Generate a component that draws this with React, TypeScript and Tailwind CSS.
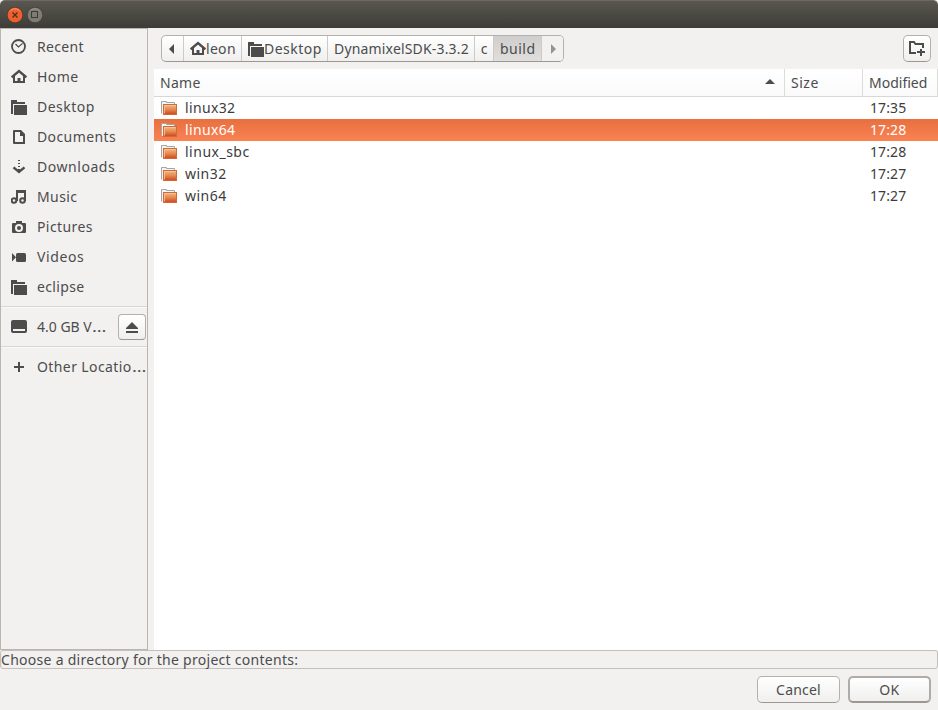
import type { ReactNode } from "react";

const ink = "#4c4c4c";

function Svg({ w = 16, h = 16, children }: { w?: number; h?: number; children: ReactNode }) {
  return (
    <svg width={w} height={h} viewBox={`0 0 ${w} ${h}`} fill={ink} className="block shrink-0">
      {children}
    </svg>
  );
}

const ClockIcon = () => (
  <Svg>
    <circle cx="7.5" cy="7.5" r="6.5" fill="none" stroke={ink} strokeWidth="1.8" />
    <path d="M4.5 5l3 3 4-3.6" fill="none" stroke={ink} strokeWidth="1.2" />
  </Svg>
);
const HomeIcon = () => (
  <Svg>
    <path d="M.6 8.3L8 2l7.400 6.300" fill="none" stroke={ink} strokeWidth="2.400" />
    <path d="M3 7v6h10V7" fill="none" stroke={ink} strokeWidth="2" />
    <path d="M6.500 9h3v4h-3z" />
  </Svg>
);
const FolderIcon = () => (
  <Svg>
    <path d="M0 1h6v2h8v2H2v10H0z" />
    <path d="M3 6h13v10H3z" />
  </Svg>
);
const DocIcon = () => (
  <Svg>
    <path fillRule="evenodd" d="M3 1h7l4 4v10H3q-1 0-1-1V2q0-1 1-1zM4 3v10h8V7H9V3z" />
  </Svg>
);
const DownIcon = () => (
  <Svg>
    <path d="M7 1h2v1H7zM7 4h2v1H7zM7 7h2v1H7zM7 10h2v3H7z" />
    <path d="M2.500 8.300L8 13l5.500-4.700" fill="none" stroke={ink} strokeWidth="2.400" />
  </Svg>
);
const MusicIcon = () => (
  <Svg>
    <circle cx="3" cy="11.500" r="2.300" fill="none" stroke={ink} strokeWidth="2" />
    <circle cx="11.500" cy="11.500" r="2.300" fill="none" stroke={ink} strokeWidth="2" />
    <path d="M5 1h10v11h-2V4H7v8H5z" />
  </Svg>
);
const CameraIcon = () => (
  <Svg>
    <path fillRule="evenodd" d="M5 2h6v2h3q1 0 1 1v8q0 1-1 1H2q-1 0-1-1V5q0-1 1-1h3zM8 5a4 4 0 100 8 4 4 0 000-8z" />
    <circle cx="8" cy="9" r="2" />
  </Svg>
);
const VideoIcon = () => (
  <Svg>
    <path d="M1 4l4 4.200-4 4.300z" />
    <rect x="5" y="4" width="10" height="9" rx="1.500" />
  </Svg>
);
const DriveIcon = () => (
  <Svg>
    <path fillRule="evenodd" d="M2 1h12q2 0 2 2v9q0 2-2 2H2q-2 0-2-2V3q0-2 2-2zM2 10v2h12v-2z" />
  </Svg>
);
const PlusIcon = () => (
  <Svg>
    <path d="M7 3h2v4h4v2H9v4H7V9H3V7h4z" />
  </Svg>
);
const EjectIcon = () => (
  <Svg w={12} h={11}>
    <path d="M6 0l6 6v1H0V6zM0 9h12v2H0z" />
  </Svg>
);
const NewFolderIcon = () => (
  <Svg w={18} h={16}>
    <path d="M8 13H2V2h4l1.500 2H15v4" fill="none" stroke={ink} strokeWidth="2" />
    <path d="M12 9h2v2h3v2h-3v3h-2v-3H9v-2h3z" />
  </Svg>
);

const DirIcon = () => (
  <svg width="16" height="16" viewBox="0 0 16 16" className="block shrink-0">
    <defs>
      <linearGradient id="dir" x1="0" y1="0" x2="0" y2="1">
        <stop offset="0" stopColor="#f0bd8c" />
        <stop offset="0.500" stopColor="#e58a50" />
        <stop offset="1" stopColor="#d0441a" />
      </linearGradient>
    </defs>
    <path d="M.5 13.500V1.500h5v1h8v3" fill="#f4f2f0" stroke="#a5a5a5" />
    <path d="M1 3h12v2H3v9H1z" fill="#f7f5f3" />
    <rect x="2.500" y="4.500" width="13" height="10" fill="url(#dir)" stroke="#d06a38" />
    <path d="M3.500 13.500v-8h11" fill="none" stroke="#f8c79c" strokeWidth=".8" />
  </svg>
);

const places = [
  { label: "Recent", icon: <ClockIcon />, track: "tracking-[0.35px]" },
  { label: "Home", icon: <HomeIcon />, track: "tracking-[0.4px]" },
  { label: "Desktop", icon: <FolderIcon />, track: "tracking-[0.5px]" },
  { label: "Documents", icon: <DocIcon />, track: "tracking-[0.4px]" },
  { label: "Downloads", icon: <DownIcon />, track: "tracking-[0.55px]" },
  { label: "Music", icon: <MusicIcon />, track: "tracking-[0.4px]" },
  { label: "Pictures", icon: <CameraIcon />, track: "tracking-[0.4px]" },
  { label: "Videos", icon: <VideoIcon />, track: "tracking-[0.6px]" },
  { label: "eclipse", icon: <FolderIcon />, track: "tracking-[0.35px]" },
];

const files = [
  { name: "linux32", time: "17:35", track: "tracking-[0.35px]" },
  { name: "linux64", time: "17:28", track: "tracking-[0.35px]", selected: true },
  { name: "linux_sbc", time: "17:28", track: "tracking-[0.5px]" },
  { name: "win32", time: "17:27", track: "tracking-[0.5px]" },
  { name: "win64", time: "17:27", track: "tracking-[0.5px]" },
];

function Place({ icon, label, track }: { icon: ReactNode; label: string; track: string }) {
  return (
    <div className="flex h-[30px] items-center pl-[10px]">
      {icon}
      <span className={`ml-[10px] whitespace-nowrap ${track}`}>{label}</span>
    </div>
  );
}

function Divider() {
  return <div className="h-[2px] shrink-0 border-t border-[#d9d7d5] bg-[#faf9f9]" />;
}

const raised = "border border-[#b4b1ad] border-b-[#9b9894] bg-gradient-to-b from-white to-[#f0efee]";
const crumb = "flex h-full items-center border-r border-[#cdcac7] whitespace-nowrap";

export default function App() {
  return (
    <div className="flex h-[710px] w-[938px] flex-col overflow-hidden bg-[#f2f1f0] font-['Noto_Sans',sans-serif] text-[14px] leading-[20px] text-[#4c4c4c]">
      <header className="flex h-[28px] shrink-0 items-center gap-[4px] rounded-t-[5px] border-t border-[#6b6962] bg-gradient-to-b from-[#59574f] to-[#3d3c37] pl-[7px]">
        <svg width="16" height="16" viewBox="0 0 16 16">
          <circle cx="8" cy="8" r="7.800" fill="#ee5f2b" stroke="#33322e" strokeWidth=".6" />
          <path d="M3 4.500a6 6 0 0110 0" fill="none" stroke="#f79a74" />
          <path d="M5.500 5.500l5 5M10.500 5.500l-5 5" stroke="#4a3028" strokeWidth="1.300" />
        </svg>
        <svg width="16" height="16" viewBox="0 0 16 16">
          <circle cx="8" cy="8" r="7.800" fill="#7d7b74" stroke="#33322e" strokeWidth=".6" />
          <path d="M3 4.500a6 6 0 0110 0" fill="none" stroke="#98968f" />
          <rect x="4.500" y="4.500" width="6" height="6" fill="none" stroke="#3c3b37" />
        </svg>
      </header>

      <div className="flex h-[622px] shrink-0">
        <aside className="flex w-[148px] shrink-0 flex-col overflow-hidden border border-[#b9b5b0] pt-[3px]">
          {places.map((p) => (
            <Place key={p.label} {...p} />
          ))}
          <div className="h-[4px] shrink-0" />
          <Divider />
          <div className="mt-[4px] flex h-[30px] items-center pl-[10px]">
            <DriveIcon />
            <span className="ml-[10px] w-[81px] whitespace-nowrap">4.0 GB V<span className="inline-block origin-left scale-x-[1.3]">…</span></span>
            <button className={`flex h-[26px] w-[28px] shrink-0 items-center justify-center rounded-[4px] ${raised}`}>
              <EjectIcon />
            </button>
          </div>
          <div className="h-[4px] shrink-0" />
          <Divider />
          <div className="h-[4px] shrink-0" />
          <div className="flex h-[30px] items-center pl-[10px]">
            <PlusIcon />
            <span className="ml-[10px] whitespace-nowrap tracking-[0.4px]">Other Locatio<span className="inline-block origin-left scale-x-[1.3]">…</span></span>
          </div>
        </aside>

        <main className="flex flex-1 flex-col pl-[6px]">
          <div className="flex h-[41px] shrink-0 items-start justify-between pt-[7px] pr-[7px] pl-[7px]">
            <nav className={`flex h-[27px] w-[403px] overflow-hidden rounded-[5px] ${raised}`}>
              <div className={`${crumb} w-[22px] pl-[7px]`}>
                <Svg w={6} h={10}><path d="M5 0v10L0 5z" /></Svg>
              </div>
              <div className={`${crumb} w-[58px] pl-[6px]`}>
                <HomeIcon />
                <span className="tracking-[0.3px]">leon</span>
              </div>
              <div className={`${crumb} w-[86px] pl-[6px]`}>
                <FolderIcon />
                <span className="tracking-[0.5px]">Desktop</span>
              </div>
              <div className={`${crumb} w-[147px] pl-[6px]`}>
                <span className="tracking-[0.170px]">DynamixelSDK-3.3.2</span>
              </div>
              <div className={`${crumb} w-[19px] justify-center`}>c</div>
              <div className={`${crumb} w-[48px] bg-gradient-to-b from-[#cfcecd] to-[#e0dfde] pl-[6px]`}>
                <span className="tracking-[0.5px]">build</span>
              </div>
              <div className="flex flex-1 items-center justify-center bg-[#f2f1f0]">
                <svg width="6" height="10" viewBox="0 0 6 10" fill="#969493"><path d="M1 0v10l5-5z" /></svg>
              </div>
            </nav>
            <button className={`flex h-[27px] w-[28px] items-center justify-center rounded-[5px] pr-[1px] pb-[2px] ${raised}`}>
              <NewFolderIcon />
            </button>
          </div>

          <section className="flex flex-1 flex-col bg-white">
            <div className="flex h-[28px] shrink-0 border-b border-[#d9d7d5] bg-gradient-to-b from-white to-[#fafafa]">
              <div className="flex w-[631px] items-center justify-between border-r border-[#dddbd9] pr-[9px] pl-[6px]">
                <span className="tracking-[0.3px]">Name</span>
                <Svg w={10} h={7}><path d="M5 0l5 5H0z" /></Svg>
              </div>
              <div className="flex w-[78px] items-center border-r border-[#dddbd9] pl-[6px] tracking-[0.5px]">Size</div>
              <div className="flex w-[75px] items-center border-r border-[#dddbd9] pl-[6px]">Modified</div>
            </div>
            {files.map((f) => (
              <div
                key={f.name}
                className={`flex h-[22px] items-center pl-[7px] ${f.selected ? "bg-gradient-to-b from-[#e8703f] to-[#f98253] text-white" : "text-[#3c3c3c]"}`}
              >
                <DirIcon />
                <span className={`ml-[8px] w-[685px] ${f.track}`}>{f.name}</span>
                <span className="tracking-[0.1px]">{f.time}</span>
              </div>
            ))}
          </section>
        </main>
      </div>

      <div className="flex h-[19px] shrink-0 items-center rounded-[3px] border border-[#c3c0bc]">
        <span className="whitespace-nowrap tracking-[0.280px]">Choose a directory for the project contents:</span>
      </div>

      <footer className="flex justify-end gap-[8px] pt-[7px] pr-[7px]">
        <button className={`h-[27px] w-[83px] rounded-[5px] tracking-[0.2px] ${raised}`}>Cancel</button>
        <button className="h-[27px] w-[83px] rounded-[5px] border-2 border-[#aeaba8] border-b-[#9b9894] bg-gradient-to-b from-white to-[#f0efee] tracking-[0.5px]">OK</button>
      </footer>
    </div>
  );
}
